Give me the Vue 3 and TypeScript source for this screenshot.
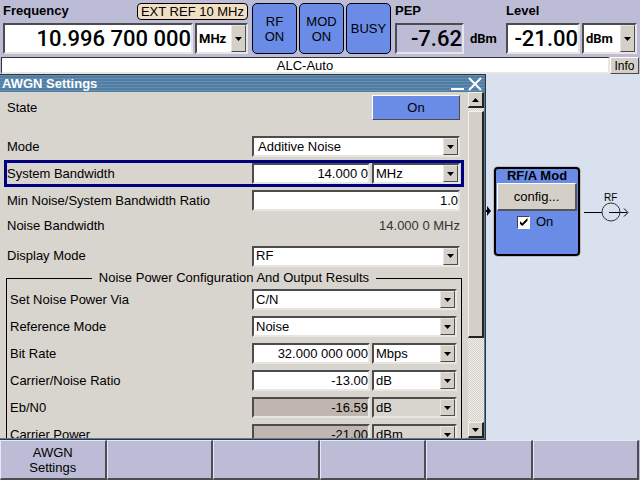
<script setup lang="ts">
import { ref } from 'vue'

interface Row {
  id: string
  label: string
  value?: string
  option?: string
  disabled?: boolean
}

const bandRows: Row[] = [
  { id: 'mode', label: 'Mode', option: 'Additive Noise' },
  { id: 'bandwidth', label: 'System Bandwidth', value: '14.000 0', option: 'MHz' },
  { id: 'ratio', label: 'Min Noise/System Bandwidth Ratio', value: '1.0' },
]

const noiseRows: Row[] = [
  { id: 'via', label: 'Set Noise Power Via', option: 'C/N' },
  { id: 'reference', label: 'Reference Mode', option: 'Noise' },
  { id: 'bitrate', label: 'Bit Rate', value: '32.000 000 000', option: 'Mbps' },
  { id: 'cn', label: 'Carrier/Noise Ratio', value: '-13.00', option: 'dB' },
  { id: 'ebn0', label: 'Eb/N0', value: '-16.59', option: 'dB', disabled: true },
  { id: 'carrier', label: 'Carrier Power', value: '-21.00', option: 'dBm', disabled: true },
]

const softkeys = ['AWGN Settings', '', '', '', '', '']
const modOn = ref(true)
</script>

<template>
  <div class="screen">
    <header class="top">
      <section class="meter frequency">
        <div class="caption">
          <label for="frequency">Frequency</label>
          <span class="extref">EXT REF 10 MHz</span>
        </div>
        <div class="readout">
          <input id="frequency" class="big" type="text" value="10.996 700 000" />
          <span class="combo unit">
            <select aria-label="Frequency unit"><option>MHz</option></select>
            <span class="drop"><svg viewBox="0 0 7 4"><path d="M0 0h7L3.5 4z" /></svg></span>
          </span>
        </div>
      </section>
      <div class="toggles">
        <button type="button">RF<br />ON</button>
        <button type="button">MOD<br />ON</button>
        <button type="button">BUSY</button>
      </div>
      <section class="meter">
        <div class="caption"><label for="pep">PEP</label></div>
        <div class="readout">
          <input id="pep" class="big pep" type="text" value="-7.62" readonly />
          <span class="plain">dBm</span>
        </div>
      </section>
      <section class="meter">
        <div class="caption"><label for="level">Level</label></div>
        <div class="readout">
          <input id="level" class="big level" type="text" value="-21.00" />
          <span class="combo unit">
            <select aria-label="Level unit"><option>dBm</option></select>
            <span class="drop"><svg viewBox="0 0 7 4"><path d="M0 0h7L3.5 4z" /></svg></span>
          </span>
        </div>
      </section>
    </header>

    <div class="status">
      <div class="message">ALC-Auto</div>
      <button type="button" class="info">Info</button>
    </div>

    <main class="work">
      <section class="dialog">
        <div class="title">
          <h1>AWGN Settings</h1>
          <button type="button" aria-label="Minimize">
            <svg viewBox="0 0 14 14"><path d="M0 12h13" stroke-width="2" /></svg>
          </button>
          <button type="button" aria-label="Close">
            <svg viewBox="0 0 14 14"><path d="M1 1l12 12M13 1L1 13" stroke-width="2" /></svg>
          </button>
        </div>
        <div class="body">
          <form class="form" @submit.prevent>
            <div class="row state">
              <span class="name">State</span>
              <button type="button" class="on">On</button>
            </div>
            <div
              v-for="row in bandRows"
              :key="row.id"
              class="row"
              :class="{ focused: row.id === 'bandwidth' }"
            >
              <label class="name" :for="row.id">{{ row.label }}</label>
              <input
                v-if="row.value"
                :id="row.id"
                class="field"
                :class="{ wide: !row.option }"
                type="text"
                :value="row.value"
              />
              <span v-if="row.option" class="combo" :class="{ wide: !row.value }">
                <select :id="row.value ? row.id + '-unit' : row.id" :class="{ indent: row.id === 'mode' }" :aria-label="row.label">
                  <option>{{ row.option }}</option>
                </select>
                <span class="drop"><svg viewBox="0 0 7 4"><path d="M0 0h7L3.5 4z" /></svg></span>
              </span>
            </div>
            <div class="row short">
              <span class="name">Noise Bandwidth</span>
              <output class="result">14.000 0 MHz</output>
            </div>
            <div class="row display">
              <label class="name" for="display">Display Mode</label>
              <span class="combo wide">
                <select id="display"><option>RF</option></select>
                <span class="drop"><svg viewBox="0 0 7 4"><path d="M0 0h7L3.5 4z" /></svg></span>
              </span>
            </div>
            <fieldset>
              <legend>Noise Power Configuration And Output Results</legend>
              <div v-for="row in noiseRows" :key="row.id" class="row">
                <label class="name" :for="row.id">{{ row.label }}</label>
                <input
                  v-if="row.value"
                  :id="row.id"
                  class="field"
                  type="text"
                  :value="row.value"
                  :readonly="row.disabled"
                  :class="{ dim: row.disabled }"
                />
                <span class="combo" :class="{ wide: !row.value, dim: row.disabled }">
                  <select :id="row.value ? row.id + '-unit' : row.id" :aria-label="row.label">
                    <option>{{ row.option }}</option>
                  </select>
                  <span class="drop"><svg viewBox="0 0 7 4"><path d="M0 0h7L3.5 4z" /></svg></span>
                </span>
              </div>
            </fieldset>
          </form>
          <div class="scrollbar">
            <button type="button" aria-label="Scroll up"><svg viewBox="0 0 7 4"><path d="M0 4h7L3.5 0z" /></svg></button>
            <div class="track"><div class="thumb"></div></div>
            <button type="button" aria-label="Scroll down"><svg viewBox="0 0 7 4"><path d="M0 0h7L3.5 4z" /></svg></button>
          </div>
        </div>
      </section>

      <section class="diagram">
        <svg class="wires" width="154" height="180" viewBox="0 0 154 180">
          <path d="M0 136h1v-4l4 5-4 5v-4H0z" fill="#000" />
          <g fill="none" stroke="#000">
            <path d="M98 138.500h18M123 138.500h18" />
            <path d="M138 134.500l4 4-4 4" />
            <circle cx="125" cy="138" r="9" stroke="#333" />
          </g>
        </svg>
        <span class="port">RF</span>
        <div class="block">
          <h2>RF/A Mod</h2>
          <button type="button">config...</button>
          <label><input v-model="modOn" type="checkbox" />On</label>
        </div>
      </section>
    </main>

    <nav class="softkeys">
      <button v-for="(key, i) in softkeys" :key="i" type="button">{{ key }}</button>
    </nav>
  </div>
</template>

<style>
body {
  background: #bcbcd6;
}
</style>

<style scoped>
* {
  box-sizing: border-box;
}

.screen {
  display: flex;
  flex-direction: column;
  height: 100vh;
  background: #bcbcd6;
  color: #000;
  font: 13px/16px "Liberation Sans", Arial, sans-serif;
}

button,
input,
select {
  margin: 0;
  padding: 0;
  border-radius: 0;
  color: inherit;
  font: inherit;
}

.top {
  display: flex;
  gap: 4px;
  padding: 3px 3px 0;
  height: 57px;
}

.meter {
  display: flex;
  flex-direction: column;
}

.frequency {
  flex: 1;
}

.caption {
  display: flex;
  justify-content: space-between;
  height: 20px;
  font-weight: bold;
}

.extref {
  height: 17px;
  padding: 0 3px;
  border: 1px solid #000;
  border-radius: 4px;
  background: #f0dfc4;
  font-weight: normal;
  line-height: 15px;
}

.readout {
  display: flex;
  gap: 2px;
  height: 31px;
}

.big,
.field,
.combo {
  border: 2px solid;
  border-color: #4c4c4c #e8e6e2 #e8e6e2 #4c4c4c;
  background: #fff;
}

.big {
  flex: 1;
  width: 0;
  font: 500 22px/27px Roboto, "Liberation Sans", sans-serif;
  text-align: right;
}

.big.pep {
  flex: none;
  width: 69px;
  background: #bcbcd6;
}

.big.level {
  flex: none;
  width: 74px;
}

.plain,
.unit select {
  font: bold 13px/27px Roboto, "Liberation Sans", sans-serif;
}

.plain {
  width: 36px;
  padding: 2px 0 0 4px;
}

.unit {
  width: 55px;
}

.frequency .unit {
  width: 53px;
}

.toggles {
  display: grid;
  grid-template-columns: repeat(3, 45px);
  gap: 2px;
  height: 51px;
}

.toggles button {
  border: 1px solid #000;
  border-radius: 5px;
  background: #6a8ce6;
  line-height: 15px;
}

.combo {
  position: relative;
  display: block;
}

select {
  display: block;
  width: 100%;
  height: 100%;
  padding: 0 15px 0 2px;
  border: 0;
  background: transparent;
  appearance: none;
  outline: 0;
}

select.indent {
  padding-left: 4px;
}

.drop {
  position: absolute;
  top: 0;
  right: 0;
  bottom: 0;
  display: grid;
  place-items: center;
  width: 15px;
  border: 1px solid;
  border-color: #e8e6e2 #4c4c4c #4c4c4c #e8e6e2;
  background: #d4d0c8;
  pointer-events: none;
}

.drop svg,
.scrollbar svg {
  width: 7px;
  height: 4px;
}

.status {
  display: flex;
  height: 17px;
  padding: 0 1px;
}

.message {
  flex: 1;
  border: 1px solid;
  border-width: 1px 2px 2px 1px;
  border-color: #333 #e8e6e2 #e8e6e2 #333;
  background: #fff;
  line-height: 15px;
  text-align: center;
}

.info {
  width: 29px;
  border: 1px solid;
  border-color: #fff #4c4c4c #4c4c4c #fff;
  background: #d4d0c8;
  font-size: 12px;
  line-height: 14px;
}

.work {
  display: grid;
  flex: 1;
  grid-template-columns: 1fr 154px;
  min-height: 0;
}

.dialog {
  display: flex;
  flex-direction: column;
  min-height: 0;
  border: solid #333;
  border-width: 1px 1px 1px 0;
  background: #d8d4ce;
}

.title {
  display: flex;
  align-items: center;
  height: 17px;
  padding: 0 3px 0 2px;
  gap: 3px;
  background: repeating-linear-gradient(#6590b5 0 1px, #527da2 1px 3px);
  color: #fff;
}

.title h1 {
  flex: 1;
  margin: 0;
  font-size: 13px;
  line-height: 17px;
}

.title button {
  width: 14px;
  height: 14px;
  border: 0;
  background: none;
}

.title svg {
  display: block;
  width: 14px;
  height: 14px;
  stroke: #fff;
}

.body {
  display: flex;
  flex: 1;
  min-height: 0;
  border: solid #4f7fa8;
  border-width: 0 1px 1px 0;
}

.form {
  flex: 1;
  padding: 2px 4px 0;
  overflow: hidden;
}

.row {
  display: grid;
  grid-template-columns: 1fr 118px 88px;
  align-items: center;
  column-gap: 2px;
  height: 27px;
  padding: 0 4px 0 3px;
}

.field,
.combo {
  height: 21px;
}

.readout .combo {
  height: 31px;
}

.field {
  width: 100%;
  text-align: right;
}

.wide {
  grid-column: 2 / 4;
}

.row.state {
  margin-bottom: 12px;
}

.on {
  grid-column: 2 / 4;
  justify-self: end;
  width: 88px;
  height: 25px;
  border: 1px solid;
  border-color: #fff #4c4c4c #4c4c4c #fff;
  background: #6a8ce6;
}

.row.focused {
  padding: 0 1px 0 0;
  border: 3px solid #000080;
}

.result {
  grid-column: 2 / 4;
  color: #333;
  text-align: right;
}

.row.short {
  height: 24px;
}

.row.display {
  height: 36px;
}

fieldset {
  min-width: 0;
  margin: -4px 2px 0;
  padding: 0 0 8px;
  border: 1px solid #000;
}

legend {
  margin: 0 auto;
  padding: 0 7px;
  line-height: 16px;
}

fieldset .row {
  grid-template-columns: 1fr 118px 85px;
}

.field.dim {
  background: #c0b6af;
}

.combo.dim {
  background: #d8d4ce;
}

.scrollbar {
  display: flex;
  flex-direction: column;
  width: 16px;
}

.scrollbar button {
  display: grid;
  place-items: center;
  height: 16px;
  border: solid;
  border-width: 1px 2px 2px 1px;
  border-color: #f4f2ee #222 #222 #f4f2ee;
  background: #d4d0c8;
}

.track {
  flex: 1;
  padding-top: 3px;
  background: repeating-conic-gradient(#f0eeea 0 25%, #d4d0c8 0 50%) 0 0 / 2px 2px;
}

.thumb {
  height: 73%;
  border: solid;
  border-width: 1px 2px 2px 1px;
  border-color: #f4f2ee #222 #222 #f4f2ee;
  background: #d4d0c8;
}

.diagram {
  position: relative;
  background: #d9e0ee;
}

.wires {
  display: block;
}

.port {
  position: absolute;
  top: 118px;
  left: 118px;
  font-size: 10px;
  line-height: 12px;
}

.block {
  position: absolute;
  top: 93px;
  left: 8px;
  display: flex;
  flex-direction: column;
  width: 86px;
  height: 89px;
  border: 2px solid #000;
  border-radius: 4px;
  background: #6a8ce6;
  box-shadow: 0 0 0 1px #bdbdbd;
}

.block h2 {
  margin: 0;
  font-size: 13px;
  line-height: 14px;
  text-align: center;
}

.block button {
  height: 28px;
  margin: 0 1px;
  border: solid;
  border-width: 1px 2px 2px 1px;
  border-color: #fff #555 #555 #fff;
  background: #d4d0c8;
}

.block label {
  display: flex;
  align-items: center;
  gap: 6px;
  margin-top: 3px;
  padding-left: 21px;
}

.block input {
  display: grid;
  place-items: center;
  width: 13px;
  height: 13px;
  border: 1px solid;
  border-color: #444 #fff #fff #444;
  background: #fff;
  appearance: none;
}

.block input:checked::before {
  content: "";
  width: 8px;
  height: 8px;
  background: #000;
  clip-path: polygon(0 35%, 35% 65%, 100% 0, 100% 35%, 35% 100%, 0 70%);
}

.softkeys {
  display: grid;
  grid-template-columns: repeat(6, 1fr);
  height: 40px;
  padding-right: 1px;
}

.softkeys button {
  padding: 0 24px;
  border: solid;
  border-width: 1px 2px 2px 1px;
  border-color: #e8e8f4 #4c4c54 #4c4c54 #e8e8f4;
  background: #bcbcd6;
  line-height: 15px;
}
</style>
